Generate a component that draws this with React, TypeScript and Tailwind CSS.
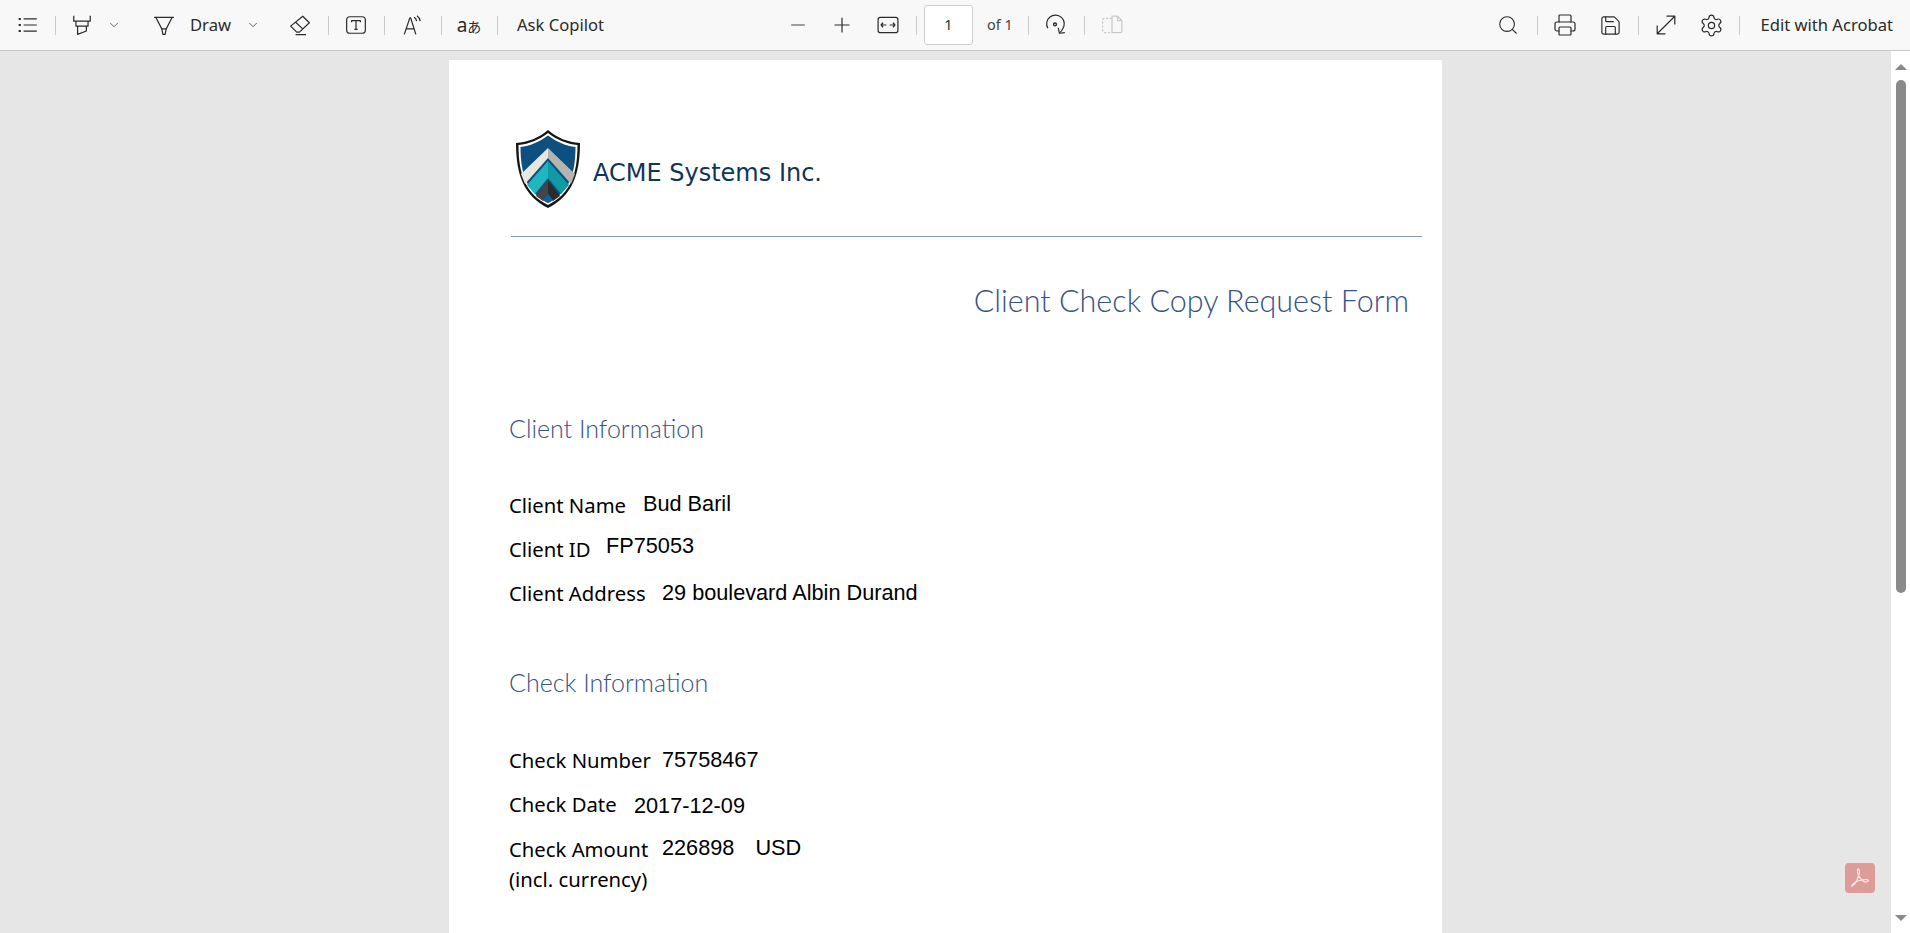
import { Search, Printer, Save, Settings, Minus, Plus, ChevronDown } from 'lucide-react';
import type { ReactNode } from 'react';

const uiFont = "font-['Noto_Sans','Open_Sans',sans-serif]";
const valueFont = "font-['Liberation_Sans',Arial,sans-serif]";

function Btn({ className = '', children }: { className?: string; children: ReactNode }) {
  return <div className={`w-[36px] h-[36px] flex items-center justify-center shrink-0 ${className}`}>{children}</div>;
}

function Sep({ className = '' }: { className?: string }) {
  return <div className={`w-px h-[19px] bg-[#c9c9c9] shrink-0 ${className}`} />;
}

function Svg({ children, size = 22 }: { children: ReactNode; size?: number }) {
  return (
    <svg width={size} height={size} viewBox="0 0 20 20" fill="none" stroke="#2b2b2b" strokeWidth="1.1" strokeLinejoin="round">
      {children}
    </svg>
  );
}

function Toolbar() {
  return (
    <div className={`h-[51px] shrink-0 flex items-center pl-[10px] pr-[17px] bg-[#f8f8f8] border-b border-[#c6c6c6] text-[#2b2b2b] text-[16.6px] ${uiFont}`}>
      <Btn>
        <Svg>
          <path d="M6 4.500h12M6 10h12M6 15.500h12" />
          <path d="M1.500 4.500h2M1.500 10h2M1.500 15.500h2" strokeWidth="1.8" />
        </Svg>
      </Btn>
      <Sep className="ml-[9px]" />
      <Btn className="ml-[8px]">
        <Svg>
          <path d="M2.500 1.500v5h15v-5M4.500 6.500v4.500h11v-4.500" />
          <path d="M6 11v7.500l8-3v-4.500" />
        </Svg>
      </Btn>
      <ChevronDown className="ml-[7px] w-[14px] h-[14px] text-[#444] mx-px" strokeWidth={1.4} />
      <Btn className="ml-[24px]">
        <Svg>
          <path d="M1 3h18M2.500 3l5.500 10.500h4L17.500 3" />
          <path d="M8 13.500l1 5h2l1-5" />
        </Svg>
      </Btn>
      <span className="ml-[8px] w-[40px]">Draw</span>
      <ChevronDown className="ml-[16px] w-[14px] h-[14px] text-[#444] mx-px" strokeWidth={1.4} />
      <Btn className="ml-[21px]">
        <Svg>
          <path d="M12.500 2l6 6-9 8.500h-2.500l-5.500-5.500z" />
          <path d="M6 7.500l6.500 6M6 18.800h9.500" />
        </Svg>
      </Btn>
      <Sep className="ml-[10px]" />
      <Btn className="ml-[9px]">
        <Svg>
          <rect x="1.500" y="2.500" width="17" height="15" rx="3" />
          <path d="M6 6h8M6 6v1.500M14 6v1.500M10 6v8M8.500 14h3" />
        </Svg>
      </Btn>
      <Sep className="ml-[10px]" />
      <Btn className="ml-[9px]">
        <Svg>
          <path d="M3 18.500L8 3.500h.8L13.500 18.500M4.800 13.500h7.500" />
          <path d="M12 3c1.300.8 2 2 2.200 3.500M14.500 1.500c1.800 1.200 2.800 3 3 5" />
        </Svg>
      </Btn>
      <Sep className="ml-[11px]" />
      <Btn className="ml-[9px]">
        <span className="text-[19px] leading-none whitespace-nowrap font-['Noto_Sans','Noto_Sans_CJK_JP',sans-serif]">
          a<span className="text-[14px]">あ</span>
        </span>
      </Btn>
      <Sep className="ml-[10px]" />
      <span className="ml-[19px] w-[88px] whitespace-nowrap">Ask Copilot</span>

      <Btn className="ml-[175px]">
        <Minus className="w-[22px] h-[22px] text-[#444]" strokeWidth={1.2} />
      </Btn>
      <Btn className="ml-[8px]">
        <Plus className="w-[24px] h-[24px]" strokeWidth={1.2} />
      </Btn>
      <Btn className="ml-[10px]">
        <Svg>
          <rect x="1" y="3" width="18" height="14" rx="2" />
          <path d="M3.500 10h5M3.500 10l2-2M3.500 10l2 2M16.500 10h-5M16.500 10l-2-2M16.500 10l-2 2" />
        </Svg>
      </Btn>
      <Sep className="ml-[10px]" />
      <div className="ml-[7px] w-[49px] h-[40px] shrink-0 flex items-center justify-center bg-white border border-[#cfcfcf] rounded-[3px] text-[14.500px]">1</div>
      <span className="ml-[14px] w-[24px] text-[14.500px] whitespace-nowrap text-[#444]">of 1</span>
      <Sep className="ml-[17px]" />
      <Btn className="ml-[8px]">
        <Svg>
          <path d="M3.500 13A8 8 0 1 1 17 13.500c-.6 1.500-1.600 2.800-3 3.700" />
          <path d="M13 12.500l1 5 5-.6" />
          <circle cx="10" cy="9.500" r="1.300" strokeWidth="1.300" />
        </Svg>
      </Btn>
      <Sep className="ml-[11px]" />
      <Btn className="ml-[9px]">
        <svg width="22" height="22" viewBox="0 0 20 20" fill="none" stroke="#c9c9c9" strokeWidth="1.100">
          <path d="M10 4h-7a1.500 1.500 0 0 0-1.500 1.500v10A1.500 1.500 0 0 0 3 17h7" strokeDasharray="2 1.500" />
          <path d="M10 17V2h5l4 4v9.500a1.500 1.500 0 0 1-1.500 1.500zM15 2v4h4" />
        </svg>
      </Btn>

      <div className="ml-auto flex items-center">
        <Btn>
          <Search className="w-[22px] h-[22px]" strokeWidth={1.2} />
        </Btn>
        <Sep className="ml-[11px]" />
        <Btn className="ml-[9px]">
          <Printer className="w-[24px] h-[24px]" strokeWidth={1.2} />
        </Btn>
        <Btn className="ml-[9px]">
          <Save className="w-[23px] h-[23px]" strokeWidth={1.2} />
        </Btn>
        <Sep className="ml-[10px]" />
        <Btn className="ml-[9px]">
          <Svg>
            <path d="M2 18L18 2M10.500 2H18v7.500M2 10.500V18h7.500" />
          </Svg>
        </Btn>
        <Btn className="ml-[9px]">
          <Settings className="w-[25px] h-[25px]" strokeWidth={1.15} />
        </Btn>
        <Sep className="ml-[10px]" />
        <span className="ml-[20px] whitespace-nowrap">Edit with Acrobat</span>
      </div>
    </div>
  );
}

function Logo() {
  return (
    <svg width="64" height="78" viewBox="0 0 64 78" className="shrink-0">
      <path d="M32 0C41 8 52 12 64 13C64 45 56 66 32 78C8 66 0 45 0 13C12 12 23 8 32 0Z" fill="#151515" />
      <path d="M32 3C41 10 51 14 61.500 15C61.500 45 54 64 32 75C10 64 2.500 45 2.500 15C13 14 23 10 32 3Z" fill="#fff" />
      <path d="M32 5.500C41 12 50 16 59.500 17C59.500 44 53 62.500 32 73C11 62.500 4.500 44 4.500 17C14 16 23 12 32 5.500Z" fill="#0d4f7e" />
      <path d="M32 18L59 44L55 54L32 28Z" fill="#b4b4b1" />
      <path d="M32 18L5 44L9 54L32 28Z" fill="#e7e7e2" />
      <path d="M32 31L53 55L45 64L32 48Z" fill="#0f9aa5" />
      <path d="M32 31L11 55L19 64L32 48Z" fill="#20b6bf" />
      <path d="M32 50L44 66L37 71L32 63Z" fill="#2c2c2e" />
      <path d="M32 50L20 66L27 71L32 63Z" fill="#454547" />
      <path d="M32 64L37 70L32 73L27 70Z" fill="#0f5fa0" />
    </svg>
  );
}

function SectionHeading({ children, className = '' }: { children: ReactNode; className?: string }) {
  return (
    <h2 className={`pl-[60px] text-[25px] leading-[32px] font-light text-[#365286] font-['Lato','Open_Sans',sans-serif] ${className}`}>
      {children}
    </h2>
  );
}

function Field({ label, value, labelClass, valueClass = '', className = '' }: { label: string; value: ReactNode; labelClass: string; valueClass?: string; className?: string }) {
  return (
    <div className={`pl-[60px] flex items-end h-[28px] text-black ${className}`}>
      <span className={`text-[20.300px] leading-[28px] whitespace-nowrap shrink-0 ${uiFont} ${labelClass}`}>{label}</span>
      <span className={`text-[21.700px] leading-[28px] whitespace-nowrap ${valueFont} ${valueClass}`}>{value}</span>
    </div>
  );
}

export default function App() {
  return (
    <div className="h-screen overflow-hidden flex flex-col bg-white">
      <Toolbar />
      <div className="flex-1 min-h-0 flex relative">
        <main className="flex-1 min-w-0 overflow-hidden bg-[#e6e6e6] flex justify-center pt-[9px]">
          <section className="w-[993px] min-h-[1300px] shrink-0 bg-white">
            <div className="pt-[70px] pl-[67px] flex items-center h-[148px]">
              <Logo />
              <span className="ml-[13px] mt-[8px] text-[24px] text-[#0f3558] font-['DejaVu_Sans',Verdana,sans-serif]">ACME Systems Inc.</span>
            </div>
            <div className="ml-[62px] mr-[20px] mt-[28px] h-px bg-[#7f9db9]" />
            <h1 className="mt-[43px] pr-[33px] text-right text-[30.500px] leading-[40px] font-light text-[#365286] font-['Lato','Open_Sans',sans-serif]">
              Client Check Copy Request Form
            </h1>
            <SectionHeading className="mt-[92px]">Client Information</SectionHeading>
            <Field className="mt-[47px]" label="Client Name" labelClass="w-[134px]" value="Bud Baril" valueClass="mb-[1px]" />
            <Field className="mt-[16px]" label="Client ID" labelClass="w-[97px]" value="FP75053" valueClass="mb-[3px]" />
            <Field className="mt-[16px]" label="Client Address" labelClass="w-[153px]" value="29 boulevard Albin Durand" />
            <SectionHeading className="mt-[59px]">Check Information</SectionHeading>
            <Field className="mt-[48px]" label="Check Number" labelClass="w-[153px]" value="75758467" />
            <Field className="mt-[16px]" label="Check Date" labelClass="w-[125px]" value="2017-12-09" valueClass="-mb-[2px]" />
            <Field
              className="mt-[17px]"
              label="Check Amount"
              labelClass="w-[153px]"
              value={
                <>
                  226898<span className="ml-[21px]">USD</span>
                </>
              }
              valueClass="mb-[1px]"
            />
            <div className={`pl-[60px] mt-[2px] text-[20.300px] leading-[28px] text-black ${uiFont}`}>(incl. currency)</div>
          </section>
        </main>
        <aside className="w-[19px] shrink-0 bg-white flex flex-col items-center pt-[13px]">
          <div className="w-0 h-0 border-x-[6px] border-x-transparent border-b-[6px] border-b-[#8a8a8a]" />
          <div className="mt-[10px] w-[10px] h-[513px] rounded-full bg-[#8a8a8a]" />
          <div className="mt-auto mb-[12px] w-0 h-0 border-x-[6px] border-x-transparent border-t-[6px] border-t-[#8a8a8a]" />
        </aside>
        <div className="absolute right-[35px] bottom-[40px] w-[30px] h-[30px] rounded-[4px] bg-[#dd9c9a] flex items-center justify-center">
          <svg width="24" height="24" viewBox="0 0 24 24" fill="none" stroke="#f7e4e2" strokeWidth="1.300" strokeLinejoin="round">
            <path d="M3.500 20c3-1 6-6 7.500-11.500.5-2 .5-5-.5-5.500s-1.500 2 -.5 5c1.500 4 5 8 7.500 8s3.500-1 2.500-2-6-.5-10 1-6.500 4-6 5z" />
          </svg>
        </div>
      </div>
    </div>
  );
}
